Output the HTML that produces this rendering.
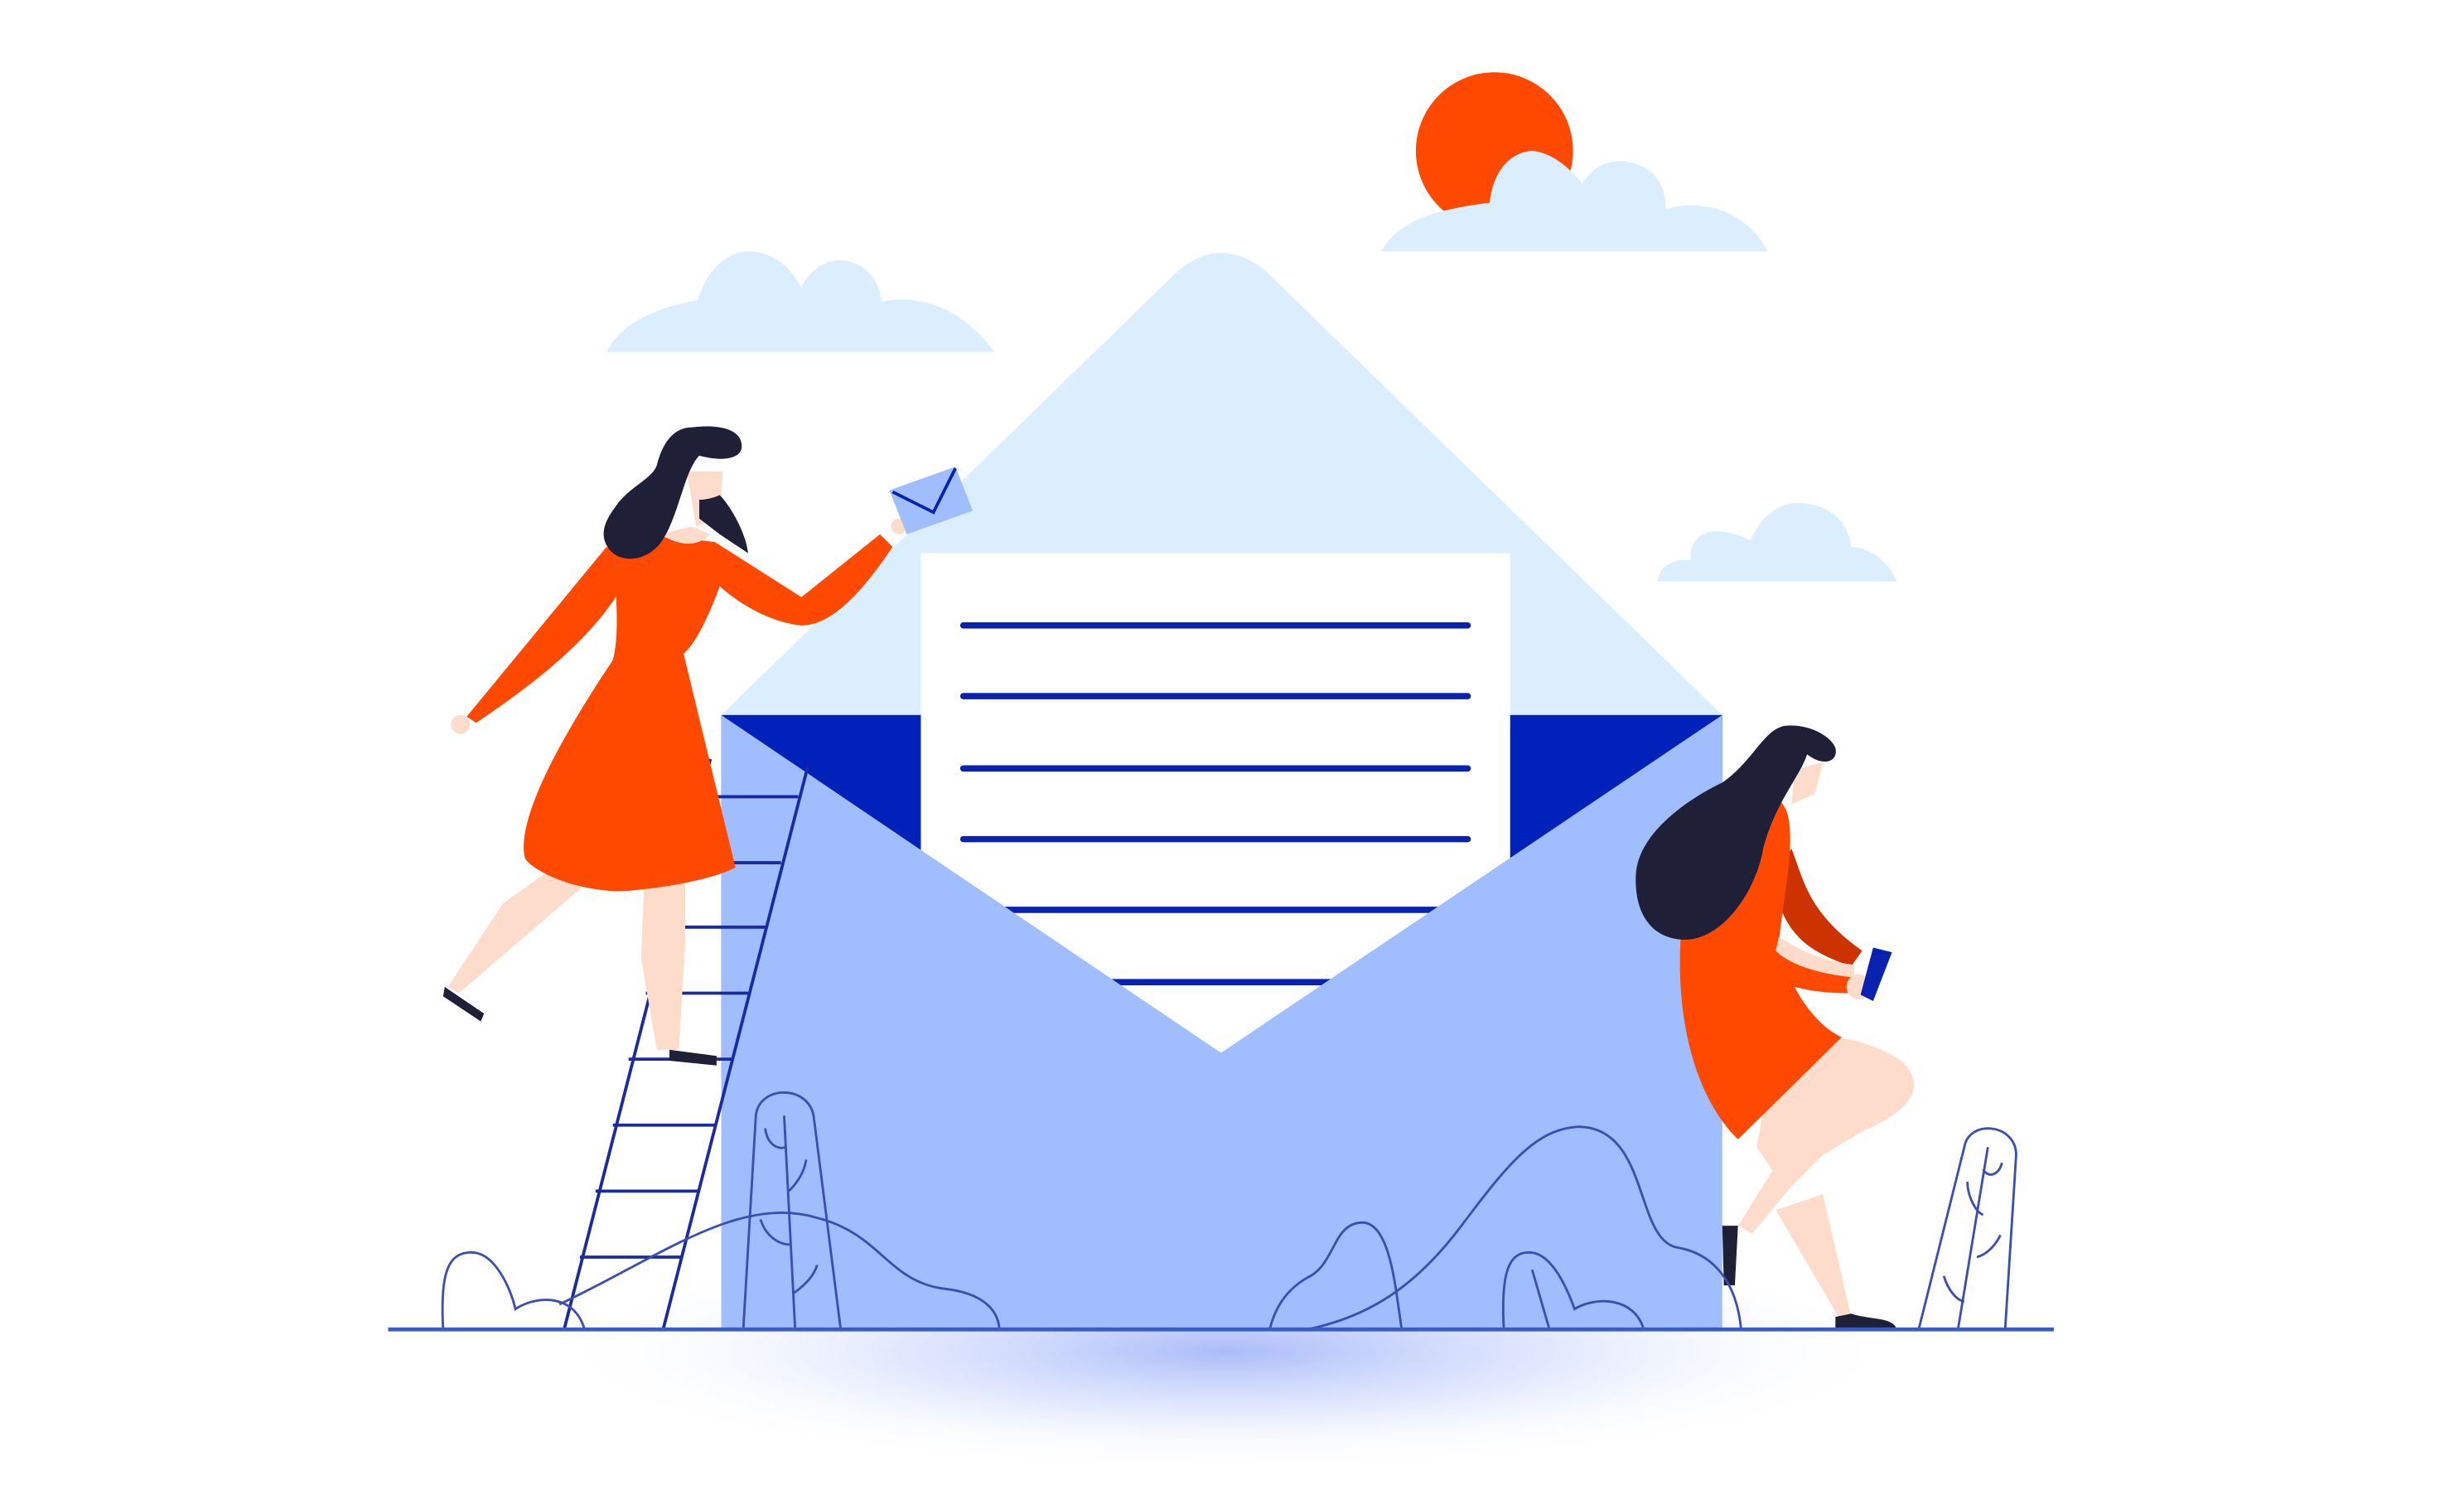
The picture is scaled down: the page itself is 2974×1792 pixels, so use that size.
<!DOCTYPE html>
<html><head><meta charset="utf-8"><style>
html,body{margin:0;padding:0;background:#fff;width:2974px;height:1792px;overflow:hidden}
svg{display:block}
</style></head><body>
<svg width="2974" height="1792" viewBox="0 0 1568 945" preserveAspectRatio="none" xmlns="http://www.w3.org/2000/svg">
<defs>
<radialGradient id="sh" cx="0.5" cy="0.5" r="0.5">
<stop offset="0" stop-color="#6f8cf5" stop-opacity="0.9"/>
<stop offset="0.5" stop-color="#a9bdfb" stop-opacity="0.5"/>
<stop offset="1" stop-color="#ffffff" stop-opacity="0"/>
</radialGradient>
</defs>
<ellipse cx="780" cy="860" rx="430" ry="75" fill="url(#sh)"/>
<rect x="0" y="847" width="1568" height="98" fill="#fff" opacity="0.35"/>
<circle cx="951" cy="96" r="50" fill="#ff4800"/>
<g fill="#dbeefd">
<path d="M879 160 C890 140 915 133 948 129 C950 110 960 97 975 96 C988 97 1000 108 1007 117 C1014 104 1028 100 1040 104 C1055 108 1060 120 1060 133 C1085 126 1112 135 1125 160 Z"/>
<path d="M386 224 C395 205 420 195 444 191 C450 172 462 160 476 160 C492 160 503 170 510 183 C516 170 528 164 538 166 C552 168 560 180 561 192 C590 186 615 200 633 224 Z"/>
<path d="M1055 370 C1056 360 1064 356 1076 356 C1075 345 1082 338 1092 338 C1100 338 1108 341 1114 344 C1120 330 1130 320 1145 320 C1165 321 1176 332 1178 348 C1193 349 1203 360 1207 370 Z"/>
</g>
<path d="M459 455 L750 172 Q777 150 805 172 L1096 455 Z" fill="#dbeefd"/>
<rect x="459" y="455" width="637" height="230" fill="#0022bb"/>
<rect x="586" y="352" width="375" height="330" fill="#fff"/>
<g stroke="#0a22b0" stroke-width="4" stroke-linecap="round">
<line x1="613" y1="398" x2="934" y2="398"/>
<line x1="613" y1="443" x2="934" y2="443"/>
<line x1="613" y1="489" x2="934" y2="489"/>
<line x1="613" y1="534" x2="934" y2="534"/>
<line x1="613" y1="579" x2="934" y2="579"/>
<line x1="613" y1="625" x2="934" y2="625"/>
</g>
<path d="M459 455 L777 670 L1096 455 L1096 846 L459 846 Z" fill="#a0bdfd"/>
<g stroke="#1a2aa0" stroke-width="2" fill="none">
<line x1="359" y1="846" x2="452" y2="483"/>
<line x1="422" y1="846" x2="514" y2="488"/>
<line x1="443" y1="507" x2="508" y2="507"/>
<line x1="432" y1="549" x2="497" y2="549"/>
<line x1="422" y1="590" x2="487" y2="590"/>
<line x1="411" y1="632" x2="476" y2="632"/>
<line x1="400" y1="674" x2="466" y2="674"/>
<line x1="390" y1="716" x2="455" y2="716"/>
<line x1="379" y1="758" x2="444" y2="758"/>
<line x1="369" y1="800" x2="434" y2="800"/>
</g>
<g>
<path d="M355 550 L320 575 L285 628 L292 632 L370 565 Z" fill="#fddccc"/>
<path d="M410 560 L408 610 L418 668 L432 668 L436 600 L436 560 Z" fill="#fddccc"/>
<path d="M283 628 L308 645 L306 650 L282 634 Z" fill="#1f1f38"/>
<path d="M426 668 L456 672 L456 678 L426 675 Z" fill="#1f1f38"/>
<path d="M297 456 L386 348 L400 360 L395 375 C375 408 340 435 303 460 Z" fill="#ff4800"/>
<circle cx="293" cy="461" r="6" fill="#fddccc"/>
<path d="M386 345 C405 340 420 340 455 345 L510 380 L560 340 L568 348 C550 375 530 398 510 398 C490 396 470 384 458 373 C450 395 442 410 435 416 L468 552 C450 562 400 568 390 567 C360 565 338 553 334 546 C328 520 360 465 390 420 C394 405 392 385 392 370 Z" fill="#ff4800"/>
<path d="M437 300 L460 300 L458 330 L443 335 Z" fill="#fddccc"/>
<circle cx="572" cy="335" r="5" fill="#fddccc"/>
<path d="M420 340 Q440 352 452 340 L440 335 Z" fill="#fddccc"/>
<path d="M440 272 C455 270 472 272 472 284 C472 292 460 294 445 290 C435 300 432 330 420 346 C410 358 395 358 388 350 C380 340 386 330 392 322 C400 310 415 305 418 296 C422 280 430 272 440 272 Z M445 318 C452 318 458 315 458 315 C465 322 475 340 476 352 L458 340 L445 330 Z" fill="#1f1f38"/>
<path d="M566 312 L608 297 L619 325 L577 340 Z" fill="#a0bdfd"/>
<path d="M568 313 L594 326 L608 298" fill="none" stroke="#0a22b0" stroke-width="2"/>
</g>
<g>
<path d="M1125 690 L1118 730 L1128 745 L1106 780 L1115 785 L1140 755 L1160 735 L1185 720 C1220 705 1225 690 1210 675 C1195 665 1175 660 1165 660 L1130 665 Z" fill="#fddccc"/>
<path d="M1130 770 L1170 838 L1178 838 L1160 760 Z" fill="#fddccc"/>
<path d="M1148 700 C1170 705 1188 705 1185 715 L1155 730 Z" fill="#fddccc"/>
<path d="M1096 780 L1106 780 L1104 818 L1097 818 Z" fill="#1f1f38"/>
<path d="M1168 838 L1178 836 C1190 840 1205 838 1207 846 L1168 846 Z" fill="#1f1f38"/>
<path d="M1140 540 C1148 560 1150 580 1185 605 L1178 615 C1150 605 1135 595 1128 560 Z" fill="#cc3300"/>
<path d="M1070 590 L1100 515 C1120 500 1135 505 1138 520 C1142 540 1135 570 1132 600 C1140 610 1160 615 1180 620 L1176 632 C1160 632 1150 630 1142 628 C1148 640 1160 655 1172 660 L1106 725 C1080 700 1065 650 1070 590 Z" fill="#ff4800"/>
<path d="M1132 596 C1150 608 1165 612 1180 614 L1180 622 C1160 620 1140 615 1130 605 Z" fill="#fddccc"/>
<path d="M1142 490 L1160 485 L1155 505 L1140 512 Z" fill="#fddccc"/>
<circle cx="1183" cy="628" r="8" fill="#fddccc"/>
<path d="M1192 603 L1204 606 L1192 637 L1184 633 Z" fill="#0a22b0"/>
<path d="M1135 462 C1150 460 1165 468 1168 476 C1170 485 1160 488 1150 480 C1145 495 1130 510 1122 540 C1118 565 1098 597 1073 598 C1050 598 1040 580 1041 557 C1042 530 1075 508 1096 498 C1115 485 1122 465 1135 462 Z" fill="#1f1f38"/>
</g>
<g stroke="#3b4fb0" stroke-width="1.5" fill="none">
<path d="M282 846 C280 810 285 797 300 797 C315 797 325 820 328 833 C340 825 365 822 372 846"/>
<path d="M356 830 C420 800 470 760 520 775 C560 785 565 815 600 820 C620 822 635 830 636 846"/>
<path d="M473 846 L481 710 C483 690 516 690 518 712 L535 846"/>
<path d="M499 710 L506 846 M487 718 C488 728 495 732 500 730 M502 758 C508 752 512 745 513 738 M484 776 C487 786 495 792 503 792 M505 823 C512 818 518 812 520 805"/>
<path d="M808 846 C812 830 820 820 832 813 C850 805 848 777 868 778 C885 780 888 820 892 846"/>
<path d="M832 846 C870 838 900 820 930 780 C960 740 978 718 1005 717 C1050 718 1040 790 1068 794 C1090 798 1105 815 1108 846"/>
<path d="M957 846 C955 810 960 797 973 797 C988 797 998 822 1002 833 C1015 825 1040 825 1046 846"/>
<path d="M975 808 L986 846"/>
<path d="M1221 846 L1250 730 C1253 712 1283 715 1283 735 L1276 846"/>
<path d="M1265 730 L1246 846 M1262 744 C1265 750 1272 748 1274 740 M1252 752 C1252 762 1258 772 1262 773 M1258 800 C1265 798 1270 792 1273 786 M1237 812 C1240 822 1246 828 1250 828"/>
</g>
<line x1="247" y1="846" x2="1307" y2="846" stroke="#3b5bc7" stroke-width="2.5"/>
</svg>
</body></html>
